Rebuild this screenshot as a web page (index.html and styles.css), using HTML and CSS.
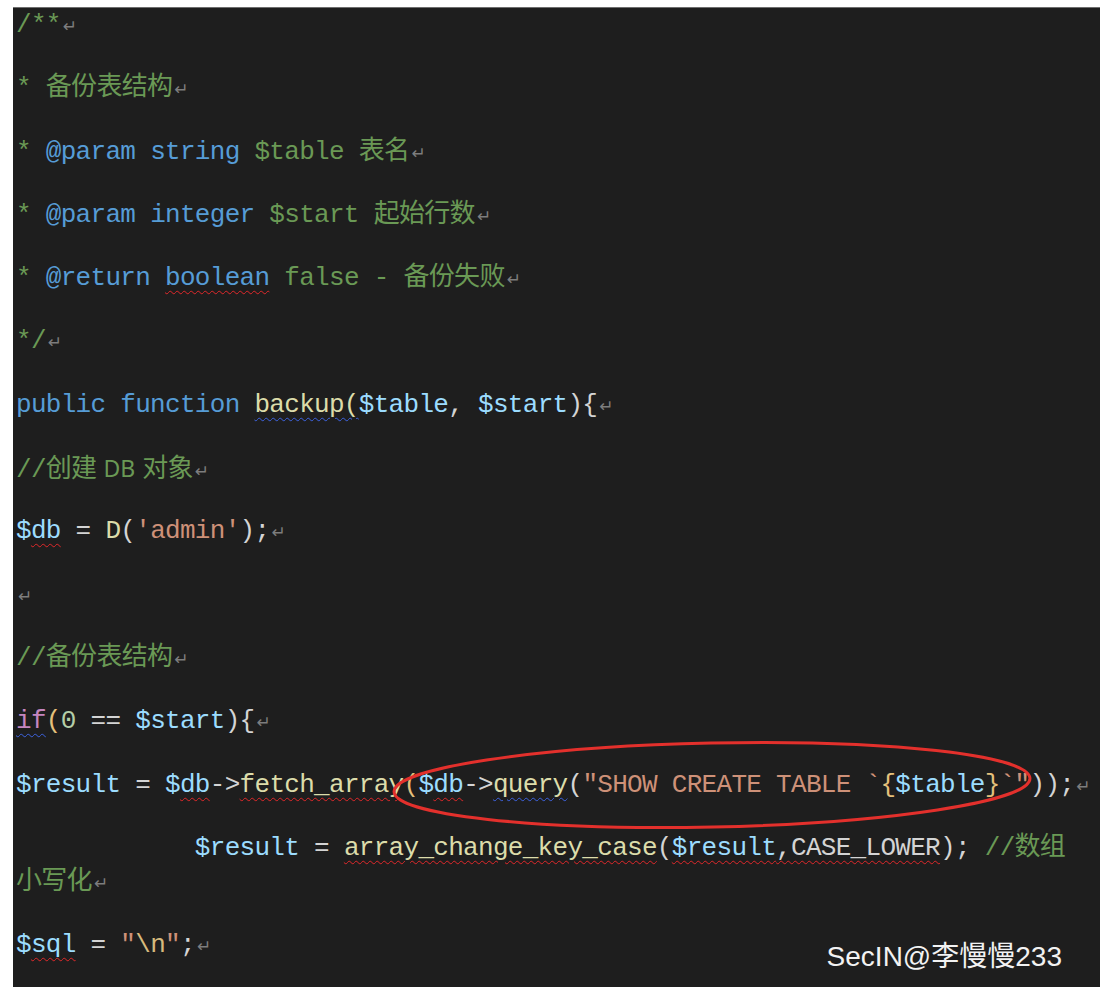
FILE: index.html
```html
<!DOCTYPE html>
<html lang="zh-CN">
<head>
    <meta charset="UTF-8">
    <meta name="viewport" content="width=device-width, initial-scale=1.0">
    <title>backup</title>
    <link rel="stylesheet" href="styles.css">
</head>
<body>
    <div class="editor">
        <p class="line"><span class="cm">/**</span><span class="ret">↵</span></p>
        <p class="line"><span class="cm">* 备份表结构</span><span class="ret">↵</span></p>
        <p class="line"><span class="cm">* </span><span class="kw">@param string</span> <span class="cm">$table 表名</span><span class="ret">↵</span></p>
        <p class="line"><span class="cm">* </span><span class="kw">@param integer</span> <span class="cm">$start 起始行数</span><span class="ret">↵</span></p>
        <p class="line"><span class="cm">* </span><span class="kw">@return</span> <span class="kw err">boolean</span> <span class="cm">false - 备份失败</span><span class="ret">↵</span></p>
        <p class="line"><span class="cm">*/</span><span class="ret">↵</span></p>
        <p class="line"><span class="kw">public function</span> <span class="fn warn">backup(</span><span class="var">$table</span>, <span class="var">$start</span>){<span class="ret">↵</span></p>
        <p class="line"><span class="cm">//创建<span class="prop">DB</span>对象</span><span class="ret">↵</span></p>
        <p class="line"><span class="var">$<span class="err">db</span></span> = <span class="fn">D</span>(<span class="str">'admin'</span>);<span class="ret">↵</span></p>
        <p class="line"><span class="ret">↵</span></p>
        <p class="line"><span class="cm">//备份表结构</span><span class="ret">↵</span></p>
        <p class="line"><span class="ctl warn">if</span><span class="br">(</span><span class="num">0</span> == <span class="var">$start</span>){<span class="ret">↵</span></p>
        <p class="line"><span class="var">$result</span> = <span class="var">$<span class="err">db</span></span>-&gt;<span class="fn err">fetch_array</span><span class="br">(</span><span class="var">$<span class="err">db</span></span>-&gt;<span class="fn warn">query</span>(<span class="str">"SHOW CREATE TABLE `</span><span class="br">{</span><span class="var">$table</span><span class="br">}</span><span class="str">`"</span>));<span class="ret">↵</span></p>
        <p class="line wrap">            <span class="var">$result</span> = <span class="fn err">array_change_key_case</span>(<span class="var err">$result</span><span class="err">,CASE_LOWER</span>); <span class="cm">//数组</span><br><span class="cm">小写化</span><span class="ret">↵</span></p>
        <p class="line"><span class="var">$<span class="err">sql</span></span> = <span class="str">"</span><span class="esc">\n</span><span class="str">"</span>;<span class="ret">↵</span></p>

        <svg class="mark" width="680" height="110" viewBox="0 0 680 110">
            <ellipse cx="332" cy="54" rx="318" ry="42" transform="rotate(-1.2 332 54)" fill="none" stroke="#e3302c" stroke-width="3"/>
        </svg>

        <div class="watermark">SecIN@李慢慢233</div>
    </div>
</body>
</html>
```
FILE: styles.css
```css
html, body {
    margin: 0;
    padding: 0;
    background: #ffffff;
    overflow: hidden;
}
.editor {
    position: relative;
    margin: 7px 0 0 13px;
    height: 980px;
    padding: 0 0 0 3px;
    box-sizing: border-box;
    background: #1e1e1e;
    border-top: 1px solid #6e6e6e;
    color: #d4d4d4;
    font-family: "Liberation Mono", "Noto Sans CJK SC", monospace;
    font-size: 26px;
    letter-spacing: -0.7px;
    overflow: hidden;
}
.line {
    margin: 0 0 29.3px 0;
    height: 34px;
    line-height: 34px;
    white-space: pre;
}
.line.wrap {
    height: 68px;
}
.cm {
    color: #6a9955;
}
.prop {
    font-family: "Noto Sans", sans-serif;
    font-size: 23px;
    letter-spacing: 0;
    margin: 0 7px;
}
.kw {
    color: #569cd6;
}
.var {
    color: #9cdcfe;
}
.fn {
    color: #dcdcaa;
}
.str {
    color: #ce9178;
}
.num {
    color: #b5cea8;
}
.ctl {
    color: #c586c0;
}
.br {
    color: #e5c07b;
}
.esc {
    color: #d7ba7d;
}
.ret {
    color: #7d7d7d;
    font-family: "DejaVu Sans", sans-serif;
    font-size: 17px;
    letter-spacing: 0;
    margin-left: 2px;
}
.err {
    text-decoration: underline wavy #e0282a;
    text-decoration-thickness: 1px;
    text-underline-offset: 5px;
}
.warn {
    text-decoration: underline wavy #3d62e0;
    text-decoration-thickness: 1px;
    text-underline-offset: 5px;
}
.mark {
    position: absolute;
    left: 367px;
    top: 723px;
}
.watermark {
    position: absolute;
    right: 38px;
    bottom: 16px;
    color: #f2f2f2;
    font-family: "Liberation Sans", "Noto Sans CJK SC", sans-serif;
    font-size: 28px;
    line-height: 28px;
    letter-spacing: 0;
}
```
